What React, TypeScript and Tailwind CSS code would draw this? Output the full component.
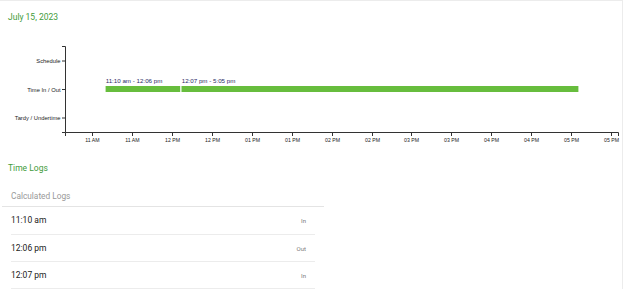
import React from 'react';

const tickLabels = [
  '11 AM', '11 AM', '12 PM', '12 PM', '01 PM', '01 PM', '02 PM',
  '02 PM', '03 PM', '03 PM', '04 PM', '04 PM', '05 PM', '05 PM',
];

const lanes = [
  { label: 'Schedule', y: 61 },
  { label: 'Time In / Out', y: 89.5 },
  { label: 'Tardy / Undertime', y: 118 },
];

const logs = [
  { time: '11:10 am', type: 'In' },
  { time: '12:06 pm', type: 'Out' },
  { time: '12:07 pm', type: 'In' },
];

function TimelineChart() {
  const axisFont = "'Liberation Sans', Arial, sans-serif";
  return (
    <svg width="624" height="128" viewBox="0 22 624 128" className="block">
      {/* y axis */}
      <path d="M62,46.5H65.5V132.5H62" fill="none" stroke="#333" strokeWidth="1" />
      {lanes.map((l) => (
        <g key={l.label}>
          <line x1="62" x2="65.5" y1={l.y} y2={l.y} stroke="#333" strokeWidth="1" />
          <text
            x="60.5"
            y={l.y}
            textAnchor="end"
            dominantBaseline="central"
            fontSize="5.8"
            fontFamily={axisFont}
            fill="#222"
          >
            {l.label}
          </text>
        </g>
      ))}

      {/* x axis */}
      <path d="M65.5,136V132.5H618.5V136" fill="none" stroke="#333" strokeWidth="1" />
      {tickLabels.map((t, i) => {
        const x = Math.floor(92.3 + i * 39.96) + 0.5;
        return (
          <g key={i}>
            <line x1={x} x2={x} y1="132.5" y2="136" stroke="#333" strokeWidth="1" />
            <text
              x={x}
              y="141.8"
              textAnchor="middle"
              fontSize="5.2"
              fontFamily={axisFont}
              fill="#222"
            >
              {t}
            </text>
          </g>
        );
      })}

      {/* time in / out bars */}
      <rect x="105.6" y="86" width="74.6" height="6" fill="#67bd3d" />
      <rect x="181.5" y="86" width="396.9" height="6" fill="#67bd3d" />
      <text x="105.7" y="83" fontSize="6.2" fontFamily={axisFont} fill="#2a2a66">
        11:10 am - 12:06 pm
      </text>
      <text x="181.7" y="83" fontSize="6.2" fontFamily={axisFont} fill="#2a2a66">
        12:07 pm - 5:05 pm
      </text>
    </svg>
  );
}

export default function App() {
  return (
    <div className="w-[623px] h-[289px] overflow-hidden bg-white border-t border-r border-[#ececec] font-['Roboto',sans-serif]">
      <p className="pl-2 pt-[11px] text-[8.5px] leading-[10px] text-[#3f9b3a]">July 15, 2023</p>

      <TimelineChart />

      <p className="mt-[13px] pl-2 text-[8.5px] leading-[10px] text-[#3f9b3a]">Time Logs</p>

      {/* calculated logs card */}
      <div className="mt-[18px] ml-[2px] w-[322px]">
        <div className="pl-[9px] pb-[5px] text-[8.3px] leading-[10px] text-[#999999] border-b border-[#e4e4e4]">
          Calculated Logs
        </div>
        <ul className="mx-[9px]">
          {logs.map((log, i) => (
            <li
              key={log.time}
              className={`flex items-center justify-between border-b border-[#ececec] pr-[9px] ${i === 0 ? 'h-[28px]' : 'h-[27px]'}`}
            >
              <span className="text-[8.5px] text-[#212121]">{log.time}</span>
              <span className="text-[6px] text-[#7a7a7a]">{log.type}</span>
            </li>
          ))}
        </ul>
      </div>
    </div>
  );
}
